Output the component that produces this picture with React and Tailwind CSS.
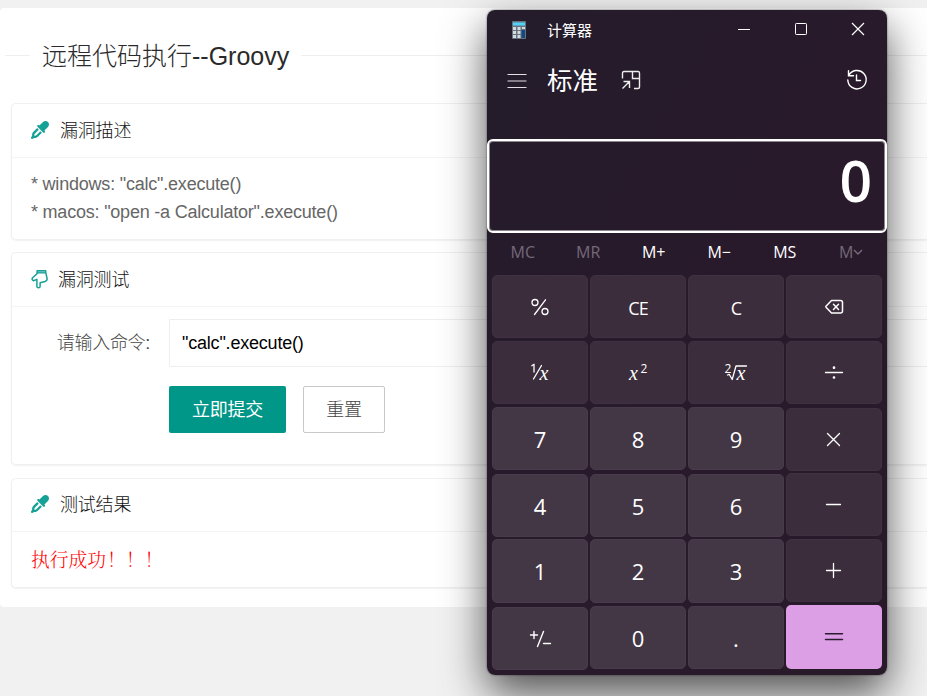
import React from "react";
import { FaEyeDropper } from "react-icons/fa6";

const web = "font-['Liberation_Sans','Noto_Sans_CJK_SC',sans-serif]";
const ui = "font-['Open_Sans','Noto_Sans_CJK_SC',sans-serif]";

function HandDown() {
  return (
    <svg className="h-5 w-[18px] text-[#16a196]" viewBox="0 0 18 20" fill="none" stroke="currentColor" strokeLinejoin="round" strokeLinecap="round">
      <path d="M6 1.700h8.800v2.200H6z" strokeWidth="1.3" fill="currentColor" fillOpacity=".6" />
      <path d="M6.200 4.500 1.600 8.800c-1.100 1.300 0 3.300 1.600 2.700l2.700-1.100v7c0 1.700 3.200 1.700 3.200 0v-3.600l4.900-1.300c1.700-.5 2.300-1.500 2.100-2.800l-1.200-5.500" strokeWidth="1.5" />
    </svg>
  );
}

function Card({ className, icon, title, headClass, children }) {
  return (
    <section className={`ml-[11px] rounded-l-[5px] border border-r-0 border-[#f0f0f0] bg-white shadow-[0_1px_2px_0_rgba(0,0,0,0.06)] ${className}`}>
      <header className={`flex items-center border-b border-[#f4f4f4] pl-[19px] text-[18px] tracking-[-0.2px] ${headClass}`}>
        {icon}
        <span className="pt-px font-light text-[#111]">{title}</span>
      </header>
      {children}
    </section>
  );
}

const Dropper = () => <FaEyeDropper className="mb-[2px] mr-[11px] size-[18px] text-[#16a196]" />;

function Glyph({ children, w = 30, h = 24, sw = 1.3 }) {
  return (
    <svg width={w} height={h} viewBox={`0 0 ${w} ${h}`} fill="none" stroke="currentColor" strokeWidth={sw} strokeLinecap="round" strokeLinejoin="round">
      {children}
    </svg>
  );
}

const num = (t) => <span className="translate-y-[1px] text-[22px]">{t}</span>;
const word = (t) => <span className="translate-y-[2px] text-[18px] tracking-[-0.8px]">{t}</span>;
const serifX = "font-['Liberation_Serif',serif] italic text-[20px]";

const percent = (
  <Glyph><circle cx="10" cy="7.5" r="3" /><circle cx="20" cy="16.5" r="3" /><path d="M20.500 4.800 9.500 19.500" /></Glyph>
);
const reciprocal = (
  <Glyph>
    <path d="m6.800 4.700 2.200-1.400v7.700M16.500 4.500 8.500 18" strokeWidth="1.3" />
    <text x="14.5" y="18.500" className={serifX} fill="currentColor" stroke="none">x</text>
  </Glyph>
);
const square = (
  <Glyph>
    <text x="6" y="19" className={serifX} fill="currentColor" stroke="none">x</text>
    <text x="17.500" y="12" className="text-[12px]" fill="currentColor" stroke="none">2</text>
  </Glyph>
);
const root = (
  <Glyph>
    <text x="3.500" y="11.500" className="text-[12px]" fill="currentColor" stroke="none">2</text>
    <path d="m6.500 14 1.700-.7 3 5.200L15 5h10.500" strokeWidth="1.3" />
    <text x="15.500" y="18.500" className={serifX} fill="currentColor" stroke="none">x</text>
  </Glyph>
);
const backspace = (
  <Glyph>
    <path d="M12.500 5.500h9a2 2 0 0 1 2 2v8.500a2 2 0 0 1-2 2h-9L7 12.300a.8.8 0 0 1 0-1zM14.500 9.200l5 5.200M19.500 9.200l-5 5.200" strokeWidth="1.5" />
  </Glyph>
);
const divide = (
  <Glyph><path d="M6.500 11.500h17" /><circle cx="15" cy="6.700" r=".7" fill="currentColor" /><circle cx="15" cy="16.500" r=".7" fill="currentColor" /></Glyph>
);
const times = <Glyph><path d="m8.500 5.500 12 12M20.500 5.500l-12 12" /></Glyph>;
const minus = <Glyph><path d="M7.500 11.500h14" /></Glyph>;
const plus = <Glyph><path d="M7.500 11.500h14M14.500 4.500v14" /></Glyph>;
const equals = <Glyph sw={1.500}><path d="M6.500 8.800h17M6.500 14.500h17" /></Glyph>;
const sign = (
  <Glyph>
    <path d="M5.500 8h7M9 4.500v7M18.500 4.500l-6 15M18.500 16.500h7" strokeWidth="1.4" />
  </Glyph>
);

const columns = [
  [
    ["h-[63px]", percent], ["mt-[3px] h-[63px]", reciprocal], ["mt-[3px] h-[63px]", num("7")],
    ["mt-[4px] h-[63px]", num("4")], ["mt-[2px] h-[64px] pb-[2px]", num("1")], ["mt-[4px] h-[63px]", sign],
  ],
  [
    ["h-[63px]", word("CE")], ["mt-[3px] h-[63px]", square], ["mt-[3px] h-[63px]", num("8")],
    ["mt-[4px] h-[63px]", num("5")], ["mt-[2px] h-[64px] pb-[2px]", num("2")], ["mt-[3px] h-[63px]", num("0")],
  ],
  [
    ["h-[63px]", word("C")], ["mt-[3px] h-[63px]", root], ["mt-[3px] h-[63px]", num("9")],
    ["mt-[4px] h-[63px]", num("6")], ["mt-[2px] h-[64px] pb-[2px]", num("3")], ["mt-[3px] h-[63px]", num(".")],
  ],
  [
    ["h-[63px]", backspace], ["mt-[3px] h-[63px]", divide], ["mt-[4px] h-[63px]", times],
    ["mt-[2px] h-[63px]", minus], ["mt-[3px] h-[63px]", plus], ["mt-[3px] h-[64px]", equals],
  ],
];

function keyTone(c, r) {
  if (c === 3 && r === 5) return "bg-[#dc9fe5] text-[#2b1b2e]";
  if (c === 3 || r < 2) return "bg-[#3b2d3c] border border-[#403141] text-white";
  return "bg-[#433645] border border-[#483b4a] text-white";
}

function Calculator() {
  return (
    <div className={`absolute left-[487px] top-[10px] flex h-[665px] w-[400px] flex-col rounded-lg bg-linear-to-br from-[#241c2a] via-[#281a2b] to-[#291a2a] text-white shadow-[0_0_2px_rgba(0,0,0,0.6),0_18px_44px_rgba(0,0,0,0.68)] ${ui}`}>
      <div className="flex h-[40px] items-center pl-[24px]">
        <svg width="16" height="20" viewBox="0 0 16 20">
          <rect x="1" y="1" width="14" height="18" rx=".8" fill="#66727d" />
          <rect x="2" y="2.500" width="12" height="3" fill="#4fd3fa" />
          <g fill="#d3dae0">
            <path d="M2 7h3v3H2zM6.500 7h3v3h-3zM11 7h3v2h-3zM2 11h3v3H2zM6.500 11h3v3h-3zM2 15h3v3H2zM6.500 15h3v3h-3z" />
          </g>
          <path d="M10.500 10H14v8h-3.500z" fill="#124a86" />
        </svg>
        <span className="ml-[20px] text-[15px]">计算器</span>
        <div className="-mt-[2px] ml-auto flex items-center gap-[43px] pr-[22px]">
          <svg width="14" height="14" viewBox="0 0 14 14" stroke="#fff"><path d="M1 7.500h12" /></svg>
          <svg width="14" height="14" viewBox="0 0 14 14" stroke="#fff" fill="none"><rect x="1.500" y="1.500" width="11" height="11" rx=".8" /></svg>
          <svg width="14" height="14" viewBox="0 0 14 14" stroke="#fff" strokeWidth="1.200"><path d="m1 1 12 12M13 1 1 13" /></svg>
        </div>
      </div>
      <div className="flex h-[60px] items-center pl-[20px]">
        <svg width="20" height="16" viewBox="0 0 20 16" stroke="#e4dfe5" className="translate-y-[1px]"><path d="M.500 1.500h19M.500 8h19M.500 14.500h19" /></svg>
        <span className="ml-[20px] translate-y-[1px] text-[25.500px] leading-none">标准</span>
        <svg className="ml-[23px]" width="20" height="20" viewBox="0 0 20 20" fill="none" stroke="#eee" strokeWidth="1.400">
          <path d="M1.500 8.500V3q0-1.500 1.500-1.500h14q1.500 0 1.500 1.500v14q0 1.500-1.500 1.500h-4M11.500 1.500V8.500h7M1.500 18.500l7-7M2.500 11.500h6V18" />
        </svg>
        <svg className="ml-auto mr-[19px]" width="22" height="22" viewBox="0 0 22 22" fill="none" stroke="#fff" strokeWidth="1.400" strokeLinecap="round">
          <path d="M2.500 1.800v5h5M2.800 6.500A9.200 9.200 0 1 1 1.800 11M10.500 6v5.500h4" />
        </svg>
      </div>
      <div className="mt-[29px] flex h-[94px] items-center justify-end rounded-[6px] border-2 border-white pr-[13px] shadow-[inset_0_0_0_1px_#8d868f]">
        <span className="-translate-y-[6px] text-[57px] font-semibold leading-none">0</span>
      </div>
      <div className="flex h-[42px] items-center pb-[4px] pl-[3px] text-[16px] [&>span]:w-[65.500px] [&>span]:text-center">
        <span className="text-[#75697a]">MC</span>
        <span className="text-[#75697a]">MR</span>
        <span>M+</span>
        <span>M−</span>
        <span>MS</span>
        <span className="flex items-center justify-center pl-[2px] text-[#75697a]">
          M
          <svg width="10" height="8" viewBox="0 0 10 8" fill="none" stroke="currentColor" strokeWidth="1.500"><path d="m1 2 4 4 4-4" /></svg>
        </span>
      </div>
      <div className="flex gap-[2px] px-[5px]">
        {columns.map((keys, c) => (
          <div key={c} className="flex w-[96px] flex-col">
            {keys.map(([box, face], r) => (
              <button key={r} className={`flex items-center justify-center rounded-[5px] ${box} ${keyTone(c, r)}`}>
                {face}
              </button>
            ))}
          </div>
        ))}
      </div>
    </div>
  );
}

export default function App() {
  return (
    <div className={`relative h-[696px] w-[927px] overflow-hidden bg-[#f1f1f1] pt-[8px] ${web}`}>
      <main className="h-[599px] rounded-l-[4px] bg-white">
        <div className="flex h-[95px] items-center pl-[5px]">
          <div className="h-px w-[25px] bg-[#eee]" />
          <h1 className="mx-[12px] whitespace-nowrap pt-[2px] text-[25px] font-light text-[#2a2a2a]">远程代码执行--Groovy</h1>
          <div className="h-px flex-1 bg-[#eee]" />
        </div>
        <Card className="h-[137px]" headClass="h-[54px]" icon={<Dropper />} title="漏洞描述">
          <div className="pl-[19px] pt-[12px] text-[18px] leading-[28px] tracking-[-0.21px] text-[#666]">
            <p>* windows: "calc".execute()</p>
            <p>* macos: "open -a Calculator".execute()</p>
          </div>
        </Card>
        <Card className="mt-[12px] h-[213px]" headClass="h-[54px]" icon={<span className="mb-[2px] mr-[9px]"><HandDown /></span>} title="漏洞测试">
          <div className="flex pt-[12px]">
            <label className="w-[157px] pr-[19px] text-right text-[18px] font-light leading-[48px] tracking-[-0.3px] text-[#444]">请输入命令:</label>
            <div className="flex h-[48px] flex-1 items-center rounded-l-[2px] border border-r-0 border-[#eee] pl-[12px] text-[18px] tracking-[-0.2px] text-black">
              "calc".execute()
            </div>
          </div>
          <div className="mt-[19px] flex gap-[17px] pl-[157px] text-[18px] tracking-[-0.2px]">
            <button className="h-[47px] w-[117px] rounded-[2px] bg-[#009688] pt-[2px] text-white">立即提交</button>
            <button className="h-[47px] w-[82px] rounded-[2px] border border-[#c9c9c9] pt-[2px] font-light text-[#444]">重置</button>
          </div>
        </Card>
        <Card className="mt-[13px] h-[110px]" headClass="h-[53px]" icon={<Dropper />} title="测试结果">
          <p className="pl-[19px] pt-[13px] font-['Noto_Serif_CJK_SC','Noto_Sans_CJK_SC',serif] text-[18.750px] font-light leading-[28px] text-[#ff0000]">执行成功<span className="ml-[1px]">！！！</span></p>
        </Card>
      </main>
      <Calculator />
    </div>
  );
}
